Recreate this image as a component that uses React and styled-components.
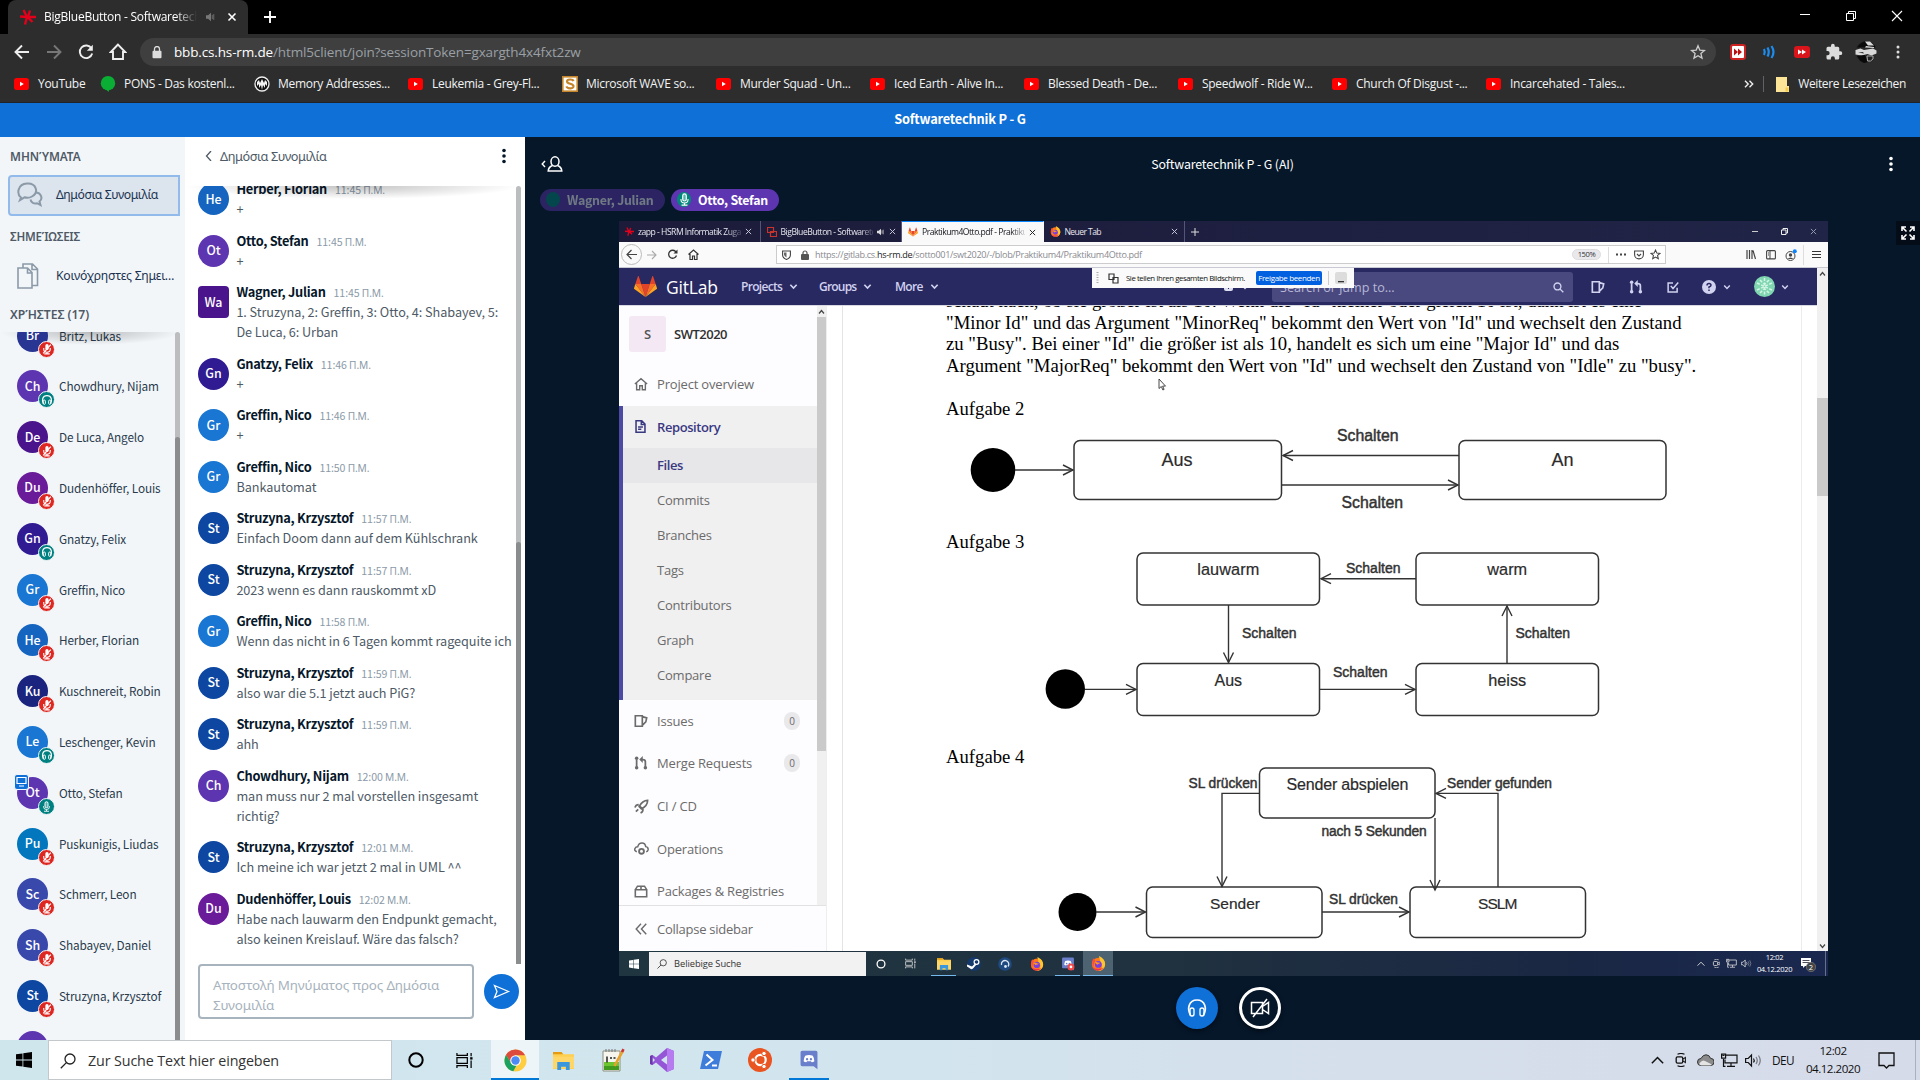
import React from 'react';
import styled, { createGlobalStyle, css } from 'styled-components';

const UI = `"Open Sans", "Noto Sans", sans-serif`;
const SRC = `"Noto Sans CJK JP", "Noto Sans", sans-serif`;
const GREEK = `"Noto Sans", sans-serif`;

const Global = createGlobalStyle`
  *, *::before, *::after { box-sizing: border-box; }
  body { margin: 0; background: #000; font-family: ${UI}; overflow: hidden; }
  svg { display: block; flex-shrink: 0; }
`;

const Desktop = styled.div`
  width: 1920px;
  height: 1080px;
  display: flex;
  flex-direction: column;
  overflow: hidden;
`;

const Txt = styled.span`
  font-family: ${(p) => p.$font || UI};
  font-size: ${(p) => p.$size || 12}px;
  font-weight: ${(p) => p.$weight || 400};
  letter-spacing: ${(p) => p.$ls || 0}px;
  color: ${(p) => p.$color || 'inherit'};
  line-height: ${(p) => p.$lh || 16}px;
  white-space: pre;
`;

const Slot = styled.span`
  width: ${(p) => p.$w}px;
  height: 100%;
  flex: none;
  display: flex;
  align-items: center;
  justify-content: center;
`;

const Spacer = styled.span`
  flex: ${(p) => (p.$w ? 'none' : 1)};
  width: ${(p) => (p.$w ? `${p.$w}px` : 'auto')};
`;

const VLine = styled.span`
  width: 1px;
  flex: none;
  height: ${(p) => p.$h}px;
  background: ${(p) => p.$color};
`;

const Ico = ({ w = 16, h, vb, children, ...rest }) => (
  <svg width={w} height={h || w} viewBox={vb || `0 0 ${w} ${h || w}`} fill="none" {...rest}>
    {children}
  </svg>
);

/* ---------- Browser window ---------- */

const TabStrip = styled.div`
  height: 34px;
  flex: none;
  background: #000;
  display: flex;
  align-items: stretch;
  padding-left: 8px;
`;

const BrowserTab = styled.div`
  width: 240px;
  height: 34px;
  border-radius: 8px 8px 0 0;
  background: #2d2d2d;
  display: flex;
  align-items: center;
  padding-left: 12px;
`;

const TabTitle = styled.div`
  width: 153px;
  margin-left: 8px;
  overflow: hidden;
  display: flex;
  mask-image: linear-gradient(90deg, #000 86%, transparent);
`;

const Toolbar = styled.div`
  height: 35px;
  flex: none;
  background: #2d2d2d;
  display: flex;
  align-items: center;
  padding: 1px 5px 0 6px;
`;

const AddressBar = styled.div`
  width: 1576px;
  height: 28px;
  border-radius: 14px;
  background: #3f3f3f;
  display: flex;
  align-items: center;
  margin-left: 6px;
`;

const Bookmarks = styled.div`
  height: 34px;
  flex: none;
  background: #2d2d2d;
  border-bottom: 1px solid #202225;
  display: flex;
  align-items: center;
  padding: 0 14px 3px 14px;
  color: #f1f3f4;
`;

const Bookmark = styled.div`
  width: ${(p) => p.$w}px;
  flex: none;
  display: flex;
  align-items: center;
  gap: 8px;
`;

const YouTubeIcon = () => (
  <Ico w={16}>
    <rect x="0" y="2" width="15" height="12" rx="2.800" fill="#f00" />
    <path d="M6 5.800v4.400L9.800 8z" fill="#fff" />
  </Ico>
);
const PonsIcon = () => (
  <Ico w={16}>
    <circle cx="8" cy="7.200" r="7.200" fill="#0aae34" />
    <path d="M4 12l5 4-.5-5z" fill="#0aae34" />
  </Ico>
);
const MemoryIcon = () => (
  <Ico w={16}>
    <circle cx="8" cy="8" r="7" fill="#111" stroke="#eee" strokeWidth="1.300" />
    <path d="M3 10V6l2-2 1 3 2-4 2 4 1-3 2 2v4l-2-2v4l-2-3-1 5-1-5-2 3V8z" fill="#f2f2f2" />
  </Ico>
);
const WaveIcon = () => (
  <Ico w={16}>
    <rect x=".8" y=".8" width="14.400" height="14.400" fill="#fff" stroke="#c5862b" strokeWidth="1.600" />
    <path d="M11.500 5.200C10.800 3 5 2.800 5 5.600c0 2.800 6.500 1.600 6.500 4.600 0 3-6.500 2.700-7 .2" stroke="#c5862b" strokeWidth="2.200" />
  </Ico>
);

const BOOKMARKS = [
  ['YouTube', YouTubeIcon, 86],
  ['PONS - Das kostenl...', PonsIcon, 154],
  ['Memory Addresses...', MemoryIcon, 154],
  ['Leukemia - Grey-Fl...', YouTubeIcon, 154],
  ['Microsoft WAVE so...', WaveIcon, 154],
  ['Murder Squad - Un...', YouTubeIcon, 154],
  ['Iced Earth - Alive In...', YouTubeIcon, 154],
  ['Blessed Death - De...', YouTubeIcon, 154],
  ['Speedwolf - Ride W...', YouTubeIcon, 154],
  ['Church Of Disgust -...', YouTubeIcon, 154],
  ['Incarcehated - Tales...', YouTubeIcon, 154],
];

const SpeakerSmall = ({ color = '#777', w = 10 }) => (
  <Ico w={w} vb="0 0 12 12">
    <path d="M0 4h2.500L6 1v10L2.500 8H0z" fill={color} />
    <path d="M7.500 3.500v5M9.300 2.500v7" stroke={color} strokeWidth="1" />
  </Ico>
);

const HsrmStar = ({ w = 16 }) => (
  <Ico w={w} vb="0 0 16 16">
    <path d="M3.500 1l3 6M8 8h8M8 8l2-6.500M7 8L5 15.500M7.500 8l5 5M7 8L0 7.500" stroke="#e2001a" strokeWidth="2.400" />
  </Ico>
);

const Browser = () => (
  <>
    <TabStrip>
      <BrowserTab>
        <HsrmStar />
        <TabTitle><Txt $size={12} $color="#fff" $ls={-0.25}>BigBlueButton - Softwaretechnik</Txt></TabTitle>
        <Slot $w={27}><SpeakerSmall /></Slot>
        <Slot $w={16}><Ico w={10}><path d="M1.500 1.500l7 7M8.500 1.500l-7 7" stroke="#fff" strokeWidth="1.600" /></Ico></Slot>
      </BrowserTab>
      <Slot $w={44}><Ico w={12}><path d="M6 0v12M0 6h12" stroke="#fff" strokeWidth="1.900" /></Ico></Slot>
      <Spacer />
      <Slot $w={46}><Ico w={10}><path d="M0 2.500h10" stroke="#fff" /></Ico></Slot>
      <Slot $w={46}><Ico w={12} h={18}><path d="M1.500 5.500h7v7h-7zM3.500 5.500v-2h7v7h-2" stroke="#fff" /></Ico></Slot>
      <Slot $w={46}><Ico w={12} h={18}><path d="M1 3l10 10M11 3L1 13" stroke="#fff" strokeWidth="1.100" /></Ico></Slot>
    </TabStrip>
    <Toolbar>
      <Slot $w={32}><Ico w={16}><path d="M15 8H2M8 1.500L1.500 8 8 14.500" stroke="#eee" strokeWidth="1.900" /></Ico></Slot>
      <Slot $w={32}><Ico w={16}><path d="M1 8h13M8 1.500L14.500 8 8 14.500" stroke="#777" strokeWidth="1.900" /></Ico></Slot>
      <Slot $w={32}><Ico w={16}><path d="M13.500 4.500A6.300 6.300 0 1 0 14.200 9.500" stroke="#eee" strokeWidth="1.900" /><path d="M14.800.8v6h-6z" fill="#eee" /></Ico></Slot>
      <Slot $w={32}><Ico w={18}><path d="M9 1.500L1.800 9H4v7h10V9h2.200z" stroke="#eee" strokeWidth="1.900" /></Ico></Slot>
      <AddressBar>
        <Slot $w={34}><Ico w={10} h={13}><rect x=".5" y="4.800" width="9" height="7.500" rx="1" fill="#ddd" /><path d="M2.500 5V3a2.500 2.500 0 0 1 5 0v2" stroke="#ddd" strokeWidth="1.300" /></Ico></Slot>
        <Txt $size={13.5} $color="#fff" $ls={-0.15}>bbb.cs.hs-rm.de</Txt>
        <Txt $size={13.5} $color="#9aa0a6" $ls={-0.13}>/html5client/join?sessionToken=gxargth4x4fxt2zw</Txt>
        <Spacer />
        <Slot $w={36}><Ico w={16}><path d="M8 1.800l1.800 4.300 4.600.4-3.500 3 1.100 4.600L8 11.700l-4 2.400L5.100 9.500l-3.500-3 4.600-.4z" stroke="#ccc" strokeWidth="1.300" /></Ico></Slot>
      </AddressBar>
      <Spacer $w={6} />
      <Slot $w={32}><Ico w={16}><rect x="1" y="1" width="14" height="14" rx="2" fill="#fff" stroke="#c22" strokeWidth="2" /><path d="M4 4.500L8 8l-4 3.500zM8 4.500L12 8l-4 3.500z" fill="#b11" /></Ico></Slot>
      <Slot $w={32}><Ico w={16}><path d="M2 5q1.500 3 0 6M5.500 3.500q2.500 4.500 0 9M9.500 2q4 6 0 12" stroke="#1b8df0" strokeWidth="2.200" /></Ico></Slot>
      <Slot $w={32}><Ico w={16}><rect x="0" y="2" width="16" height="12" rx="3" fill="#d9141b" /><path d="M4 5.500L8 8l-4 2.500zM8 5.500L12 8l-4 2.500z" fill="#fff" /></Ico></Slot>
      <Slot $w={32}><Ico w={18} vb="0 0 24 24"><path d="M20.500 11H19V7a2 2 0 0 0-2-2h-4V3.500a2.500 2.500 0 0 0-5 0V5H4a2 2 0 0 0-2 2v3.800h1.500a2.700 2.700 0 0 1 0 5.400H2V20a2 2 0 0 0 2 2h3.800v-1.500a2.700 2.700 0 0 1 5.400 0V22H17a2 2 0 0 0 2-2v-4h1.500a2.500 2.500 0 0 0 0-5z" fill="#ddd" /></Ico></Slot>
      <Slot $w={32}>
        <Ico w={22}>
          <circle cx="11" cy="11" r="11" fill="#2a2a2a" />
          <path d="M2 6.500Q6 0 12 0q6 1 8.500 6z" fill="#0c0c0c" /><path d="M10 .5h5l4 4h-6zM11 5l8 1v1l-9-.5z" fill="#dcdcdc" />
          <path d="M.5 9l5-1.500L9 9l9-1.500 3.500 2v3l-5 2-4-1.500-6 1.500-6-1z" fill="#d8d8d8" /><path d="M3 11.500l5-.5 1 1.500z" fill="#333" />
          <path d="M2 15l8-1 3 7-4 1q-5-2-7-7z" fill="#090909" /><path d="M12 15h6v3l-2.500 2h-3z" stroke="#aaa" fill="#222" />
        </Ico>
      </Slot>
      <Slot $w={32}><Ico w={4} h={14}><circle cx="2" cy="2" r="1.500" fill="#ddd" /><circle cx="2" cy="7" r="1.500" fill="#ddd" /><circle cx="2" cy="12" r="1.500" fill="#ddd" /></Ico></Slot>
    </Toolbar>
    <Bookmarks>
      {BOOKMARKS.map(([label, Icon, w]) => (
        <Bookmark key={label} $w={w}><Icon /><Txt $size={12} $ls={-0.28}>{label}</Txt></Bookmark>
      ))}
      <Spacer />
      <Slot $w={14}><Ico w={10} h={8}><path d="M1 .8L4.200 4 1 7.200M5.500.8L8.700 4 5.500 7.200" stroke="#eee" strokeWidth="1.400" /></Ico></Slot>
      <Spacer $w={7} />
      <VLine $h={16} $color="#5f6368" />
      <Spacer $w={12} />
      <Ico w={13} h={15}><path d="M0 0h11v9h2v6H0z" fill="#fce597" /><path d="M9.500 10.500h3v4h-3z" fill="#f5cc4c" /></Ico>
      <Spacer $w={9} />
      <Txt $size={12} $ls={-0.36}>Weitere Lesezeichen</Txt>
    </Bookmarks>
  </>
);

/* ---------- BigBlueButton ---------- */

const MeetingHeader = styled.div`
  height: 34px;
  flex: none;
  background: #0f70d7;
  display: flex;
  align-items: center;
  justify-content: center;
  padding-bottom: 3px;
`;

const Meeting = styled.div`
  height: 903px;
  flex: none;
  display: flex;
  background: #06172a;
`;

const UserPanel = styled.div`
  width: 185px;
  flex: none;
  background: #f3f6f9;
  display: flex;
  flex-direction: column;
`;

const PanelTitle = styled.div`
  height: ${(p) => p.$h}px;
  padding: ${(p) => p.$pt || 0}px 0 0 10px;
  flex: none;
  display: flex;
  align-items: center;
  color: #4e5a66;
`;

const NavItem = styled.div`
  width: 172px;
  height: 41px;
  margin-left: 8px;
  padding: 0 0 1px 7px;
  flex: none;
  display: flex;
  align-items: center;
  border: 2px solid transparent;
  color: #1c3350;
  ${(p) => p.$active && css`
    background: #dce4ee;
    border-color: #92bbeb;
    border-radius: 4px 0 0 4px;
  `}
`;

const ScrollArea = styled.div`
  flex: ${(p) => (p.$h ? 'none' : 1)};
  height: ${(p) => (p.$h ? `${p.$h}px` : 'auto')};
  min-height: 0;
  overflow: hidden;
  position: relative;
  display: flex;
  padding-right: ${(p) => p.$pr}px;
  &::before {
    content: '';
    position: absolute;
    inset: 0 5px auto 0;
    height: 13px;
    background: radial-gradient(farthest-side at 50% 0, rgba(0,0,0,.24), rgba(0,0,0,0));
  }
`;

const ScrollTrack = styled.div`
  width: 5px;
  flex: none;
  background: #bcbdbf;
  padding-top: ${(p) => p.$top}px;
  display: flex;
  border-radius: 3px;
  &::after {
    content: '';
    flex: 1;
    background: #8b8c8e;
    border-radius: 3px 3px 0 0;
  }
`;

const Users = styled.div`
  flex: 1;
  margin-top: -21.800px;
  padding-left: 17px;
`;

const UserRow = styled.div`
  height: 50.800px;
  display: flex;
  align-items: center;
  gap: 11px;
  color: #2a3b4d;
`;

const Avatar = styled.div`
  position: relative;
  width: 31px;
  height: 32px;
  flex: none;
  border-radius: ${(p) => (p.$square ? '4px' : '50%')};
  background: ${(p) => p.$bg};
  color: #fff;
  display: flex;
  align-items: center;
  justify-content: center;
  padding-bottom: 1px;
`;

const StatusBadge = styled.span`
  position: absolute;
  left: 21px;
  top: 21px;
  width: 17px;
  height: 17px;
  border-radius: 50%;
  border: 1px solid #f3f6f9;
  background: ${(p) => p.$bg};
  display: flex;
  align-items: center;
  justify-content: center;
`;

const PresenterBadge = styled.span`
  position: absolute;
  left: -3px;
  top: -3px;
  width: 15px;
  height: 16px;
  border-radius: 3px;
  border: 1px solid #f3f6f9;
  background: #0f70d7;
  display: flex;
  align-items: center;
  justify-content: center;
`;

const MicMuted = () => (
  <Ico w={12} vb="0 0 22 22"><rect x="8" y="2" width="6" height="11" rx="3" fill="#fff" /><path d="M5 9v2a6 6 0 0 0 12 0V9M11 17v3M6 20h10" stroke="#fff" strokeWidth="2" /><path d="M4 19L18 3" stroke="#fff" strokeWidth="2.200" /></Ico>
);
const MicOn = ({ w = 11 }) => (
  <Ico w={w} vb="0 0 22 22"><rect x="8" y="1.500" width="6" height="12" rx="3" stroke="#fff" strokeWidth="2" fill="rgba(255,255,255,.35)" /><path d="M5 10v1a6 6 0 0 0 12 0v-1M11 17v3M6 20.500h10" stroke="#fff" strokeWidth="1.800" /></Ico>
);
const Phones = ({ w = 12, sw = 2.2 }) => (
  <Ico w={w} vb="0 0 22 22"><path d="M4.500 18C1 12 2.500 3 11 3s10 9 6.500 15" stroke="#fff" strokeWidth={sw} /><rect x="4" y="11" width="4" height="8" rx="2" stroke="#fff" strokeWidth={sw * 0.8} /><rect x="14" y="11" width="4" height="8" rx="2" stroke="#fff" strokeWidth={sw * 0.8} /></Ico>
);

const C = {
  Br: '#283593', Ch: '#5e35b1', De: '#4a148c', Du: '#6a1b9a', Gn: '#311b92', Gr: '#1976d2', He: '#1565c0',
  Ku: '#1a237e', Le: '#1976d2', Ot: '#5e35b1', Pu: '#0277bd', Sc: '#3949ab', Sh: '#3949ab', St: '#0d47a1', Wa: '#4a148c', Ur: '#5e35b1',
};

const USERS = [
  ['Britz, Lukas', 'muted'], ['Chowdhury, Nijam', 'listen'], ['De Luca, Angelo', 'muted'], ['Dudenhöffer, Louis', 'muted'],
  ['Gnatzy, Felix', 'listen'], ['Greffin, Nico', 'muted'], ['Herber, Florian', 'muted'], ['Kuschnereit, Robin', 'muted'],
  ['Leschenger, Kevin', 'listen'], ['Otto, Stefan', 'talk'], ['Puskunigis, Liudas', 'muted'], ['Schmerr, Leon', 'muted'],
  ['Shabayev, Daniel', 'muted'], ['Struzyna, Krzysztof', 'muted'],
];

const Person = ({ name, state }) => (
  <UserRow>
    <Avatar $bg={C[name.slice(0, 2)]}>
      <Txt $font={SRC} $size={12.4} $weight={500}>{name.slice(0, 2)}</Txt>
      <StatusBadge $bg={state === 'muted' ? '#df2721' : '#008081'}>
        {state === 'muted' ? <MicMuted /> : state === 'talk' ? <MicOn /> : <Phones />}
      </StatusBadge>
      {state === 'talk' && (
        <PresenterBadge><Ico w={11}><path d="M1 1.500h9v6H1zM3 10h5" stroke="#fff" strokeWidth="1.200" /></Ico></PresenterBadge>
      )}
    </Avatar>
    <Txt $font={SRC} $size={11.8} $ls={-0.13}>{name}</Txt>
  </UserRow>
);

const ChatPanel = styled.div`
  width: 340px;
  flex: none;
  background: #fff;
  display: flex;
  flex-direction: column;
`;

const ChatHeader = styled.div`
  height: 49px;
  flex: none;
  display: flex;
  align-items: center;
  padding: 0 19px 12px 19px;
  color: #4e5a66;
`;

const Messages = styled.div`
  flex: 1;
  padding-left: 13px;
  margin-top: -3px;
  min-width: 0;
`;

const Message = styled.div`
  display: flex;
  gap: 7.400px;
  padding-bottom: 11.500px;
  height: ${(p) => (p.$two ? 71.5 : 51.5)}px;
`;

const MessageBody = styled.div`
  display: flex;
  flex-direction: column;
  margin-top: -4px;
`;

const MessageHead = styled.div`
  display: flex;
  align-items: baseline;
  height: 20px;
  white-space: pre;
`;

const MESSAGES = [
  ['Herber, Florian', '11:45', 'Π.Μ.', '+'],
  ['Otto, Stefan', '11:45', 'Π.Μ.', '+'],
  ['Wagner, Julian', '11:45', 'Π.Μ.', '1. Struzyna, 2: Greffin, 3: Otto, 4: Shabayev, 5:\nDe Luca, 6: Urban'],
  ['Gnatzy, Felix', '11:46', 'Π.Μ.', '+'],
  ['Greffin, Nico', '11:46', 'Π.Μ.', '+'],
  ['Greffin, Nico', '11:50', 'Π.Μ.', 'Bankautomat'],
  ['Struzyna, Krzysztof', '11:57', 'Π.Μ.', 'Einfach Doom dann auf dem Kühlschrank'],
  ['Struzyna, Krzysztof', '11:57', 'Π.Μ.', '2023 wenn es dann rauskommt xD'],
  ['Greffin, Nico', '11:58', 'Π.Μ.', 'Wenn das nicht in 6 Tagen kommt ragequite ich'],
  ['Struzyna, Krzysztof', '11:59', 'Π.Μ.', 'also war die 5.1 jetzt auch PiG?'],
  ['Struzyna, Krzysztof', '11:59', 'Π.Μ.', 'ahh'],
  ['Chowdhury, Nijam', '12:00', 'Μ.Μ.', 'man muss nur 2 mal vorstellen insgesamt\nrichtig?'],
  ['Struzyna, Krzysztof', '12:01', 'Μ.Μ.', 'Ich meine ich war jetzt 2 mal in UML ^^'],
  ['Dudenhöffer, Louis', '12:02', 'Μ.Μ.', 'Habe nach lauwarm den Endpunkt gemacht,\nalso keinen Kreislauf. Wäre das falsch?'],
];

const Composer = styled.div`
  display: flex;
  align-items: center;
  padding-left: 13px;
  gap: 10px;
  height: 55px;
`;

const MessageInput = styled.div`
  width: 276px;
  height: 55px;
  border: 2px solid #a7b3bd;
  border-radius: 4px;
  padding: 9px 0 0 13px;
  overflow: hidden;
  display: flex;
  align-items: flex-start;
`;

const RoundButton = styled.div`
  width: ${(p) => p.$d}px;
  height: ${(p) => p.$d}px;
  flex: none;
  border-radius: 50%;
  background: ${(p) => (p.$ghost ? '#06172a' : '#0f70d7')};
  border: ${(p) => (p.$ghost ? '3px solid #fff' : 'none')};
  box-shadow: ${(p) => (p.$flat ? 'none' : '0 2px 4px rgba(0,0,0,.5)')};
  display: flex;
  align-items: center;
  justify-content: center;
`;

const Dots = ({ color }) => (
  <Ico w={4} h={16}><circle cx="2" cy="2.500" r="1.800" fill={color} /><circle cx="2" cy="8" r="1.800" fill={color} /><circle cx="2" cy="13.500" r="1.800" fill={color} /></Ico>
);

const Stage = styled.div`
  flex: 1;
  display: flex;
  flex-direction: column;
  position: relative;
`;

const StageBar = styled.div`
  height: 52px;
  flex: none;
  display: flex;
  align-items: center;
  padding: 2px 27px 0 16px;
  color: #fff;
`;

const Talkers = styled.div`
  display: flex;
  gap: 6px;
  height: 22px;
  padding-left: 15px;
  flex: none;
`;

const Talker = styled.div`
  width: ${(p) => p.$w}px;
  height: 22px;
  border-radius: 11px;
  background: #5e35b1;
  opacity: ${(p) => (p.$idle ? 0.42 : 1)};
  display: flex;
  align-items: center;
  padding: 0 0 1px 6px;
  gap: 7px;
  color: #fff;
`;

const TalkerDot = styled.span`
  width: 14px;
  height: 15px;
  border-radius: 50%;
  background: #00897b;
  display: flex;
  align-items: center;
  justify-content: center;
`;

const FullscreenButton = styled.div`
  position: absolute;
  right: 0;
  top: 84px;
  width: 24px;
  height: 24px;
  background: #030c17;
  display: flex;
  align-items: center;
  justify-content: center;
`;

const Actions = styled.div`
  display: flex;
  gap: 21px;
  justify-content: center;
  padding: 11px 0 0 11px;
`;

/* ---------- Shared screen ---------- */

const Shared = styled.div`
  width: 1209px;
  height: 755px;
  margin: 10px 0 0 94px;
  flex: none;
  background: #fff;
  display: flex;
  flex-direction: column;
  position: relative;
  overflow: hidden;
`;

const FxTabs = styled.div`
  height: 21px;
  flex: none;
  background: linear-gradient(90deg, #1c1b3a, #202446);
  display: flex;
  align-items: center;
`;

const FxTab = styled.div`
  width: ${(p) => p.$w || 141.5}px;
  height: 21px;
  flex: none;
  display: flex;
  align-items: center;
  padding-left: 6px;
  gap: 4px;
  background: ${(p) => (p.$active ? '#f9f9fa' : 'transparent')};
  color: ${(p) => (p.$active ? '#15141a' : '#e6e6ee')};
  border-top: ${(p) => (p.$active ? '1px solid #0a84ff' : 'none')};
  border-right: 1px solid ${(p) => (p.$active ? 'transparent' : '#55557a')};
`;

const FxTitle = styled.div`
  width: ${(p) => p.$w}px;
  flex: none;
  overflow: hidden;
  display: flex;
  mask-image: linear-gradient(90deg, #000 86%, rgba(0,0,0,.2));
`;

const FxNav = styled.div`
  height: 26px;
  flex: none;
  background: #fafafb;
  border-bottom: 1px solid #c9c9d4;
  display: flex;
  align-items: center;
  padding-left: 2px;
`;

const FxUrl = styled.div`
  width: 890px;
  height: 19px;
  background: #fff;
  border: 1px solid #ccc;
  display: flex;
  align-items: center;
`;

const BackCircle = styled.div`
  width: 21px;
  height: 21px;
  border-radius: 50%;
  border: 1px solid #bbb;
  display: flex;
  align-items: center;
  justify-content: center;
`;

const ZoomPill = styled.div`
  width: 29px;
  height: 11px;
  border-radius: 6px;
  background: #e9e9ed;
  border: 1px solid #ddd;
  display: flex;
  align-items: center;
  justify-content: center;
`;

const Page = styled.div`
  height: 683px;
  flex: none;
  display: flex;
`;

const PageMain = styled.div`
  width: 1198px;
  display: flex;
  flex-direction: column;
`;

const GitNav = styled.div`
  height: 37px;
  flex: none;
  background: #292961;
  display: flex;
  align-items: center;
  padding-left: 15px;
  color: #d1d1f0;
`;

const GitMenu = styled.div`
  width: ${(p) => p.$w}px;
  display: flex;
  align-items: center;
  gap: 7px;
`;

const GitSearch = styled.div`
  width: 301px;
  height: 30px;
  border-radius: 3px;
  background: #494980;
  display: flex;
  align-items: center;
  padding: 2px 9px 0 8px;
`;

const PageBody = styled.div`
  flex: 1;
  min-height: 0;
  display: flex;
  border-top: 1px solid #d8d8e2;
`;

const SideWrap = styled.div`
  width: 208px;
  flex: none;
  display: flex;
  flex-direction: column;
  border-right: 1px solid #eee;
  background: #fdfcfe;
`;

const SideTop = styled.div`
  height: 600px;
  flex: none;
  display: flex;
  border-bottom: 1px solid #e2e2e2;
`;

const SideList = styled.div`
  width: 198px;
  height: 599px;
  overflow: hidden;
`;

const SideScroll = styled.div`
  width: ${(p) => p.$w}px;
  background: #f0f0f0;
  display: flex;
  flex-direction: column;
  align-items: center;
`;

const Thumb = styled.div`
  width: 100%;
  height: ${(p) => p.$h}px;
  background: #cacaca;
`;

const ScrollGap = styled.span`
  flex: none;
  height: 119px;
`;

const SideItem = styled.div`
  height: ${(p) => p.$h || 42.6}px;
  display: flex;
  align-items: center;
  padding-left: 15px;
  padding-right: 17px;
  background: ${(p) => (p.$selected ? '#e7e6e9' : 'transparent')};
  color: ${(p) => (p.$accent ? '#393982' : '#6b6b6b')};
`;

const SideIcon = styled.span`
  width: 23px;
  display: flex;
`;

const RepoGroup = styled.div`
  border-left: 4px solid #4b4ba3;
  background: #f1f0f1;
  height: 294px;
  & > ${SideItem} { padding-left: 34px; }
  & > ${SideItem}:first-child { padding-left: 11px; }
`;

const ProjectHead = styled.div`
  height: 57px;
  display: flex;
  align-items: center;
  padding: 0 0 1px 10px;
  gap: 8px;
  color: #303030;
`;

const ProjectAvatar = styled.div`
  width: 37px;
  height: 36px;
  border-radius: 3px;
  background: #f4e8f5;
  display: flex;
  align-items: center;
  justify-content: center;
  color: #555;
`;

const Count = styled.span`
  width: 16px;
  height: 18px;
  border-radius: 9px;
  background: #e9e8ea;
  display: flex;
  align-items: center;
  justify-content: center;
`;

const Doc = styled.div`
  width: 960px;
  margin-left: 15px;
  border-left: 1px solid #e4e4e4;
  border-right: 1px solid #ececec;
  overflow: hidden;
  padding-left: 103px;
  display: flex;
  flex-direction: column;
  font-family: "Liberation Serif", serif;
  color: #000;
`;

const Para = styled.p`
  margin: -16px 0 0;
  font-size: 18.720px;
  line-height: 21.500px;
  height: 86px;
  flex: none;
  white-space: pre;
`;

const Heading = styled.p`
  margin: ${(p) => p.$mt || 0}px 0 0;
  font-size: 18.720px;
  line-height: 21px;
  height: 21px;
  flex: none;
  white-space: pre;
`;

const Diagram = styled.svg`
  width: 750px;
  height: ${(p) => p.$h}px;
  font-family: "Liberation Sans", Arial, sans-serif;
`;

const State = ({ x, y, w, h, label, size, base, tl, cx }) => (
  <g>
    <rect x={x} y={y} width={w} height={h} rx="6" fill="#fff" stroke="#333" strokeWidth="1.500" />
    <text x={cx || x + w / 2} y={base} fontSize={size} textAnchor="middle" textLength={tl} fill="#2b2b2b" stroke="#2b2b2b" strokeWidth=".2">{label}</text>
  </g>
);

const HEADS = { r: 'M-10-5L0 0L-10 5', l: 'M10-5L0 0L10 5', d: 'M-5-10L0 0L5-10', u: 'M-5 10L0 0L5 10' };

const Edge = ({ d, tip, dir }) => (
  <g stroke="#333" strokeWidth="1.400" fill="none">
    <path d={d} />
    <path d={HEADS[dir]} transform={`translate(${tip[0]} ${tip[1]})`} />
  </g>
);

const EdgeLabel = ({ x, y, w, size, children }) => (
  <text x={x} y={y} fontSize={size} textLength={w} fill="#333" stroke="#333" strokeWidth=".45">{children}</text>
);

const ShareBar = styled.div`
  position: absolute;
  left: 473px;
  top: 47px;
  width: 262px;
  height: 20px;
  background: #fafafa;
  display: flex;
  align-items: center;
  color: #111;
`;

const StopShare = styled.div`
  width: 66px;
  height: 14px;
  border-radius: 2px;
  background: #0060df;
  color: #fff;
  display: flex;
  align-items: center;
  justify-content: center;
`;

const MinBox = styled.div`
  width: 12px;
  height: 12px;
  border-radius: 2px;
  background: #dcdcdc;
  display: flex;
  align-items: flex-end;
  justify-content: center;
`;

const Cursor = styled.div`
  position: absolute;
  left: 539px;
  top: 157px;
`;

const InnerTaskbar = styled.div`
  height: 25px;
  flex: none;
  background: linear-gradient(90deg, #1f3540, #20313f 45%, #1a2744 80%, #1a2850);
  display: flex;
  align-items: center;
  color: #fff;
`;

const InnerSearch = styled.div`
  width: 217px;
  height: 24px;
  background: #f2f2f2;
  display: flex;
  align-items: center;
  padding-left: 8px;
  gap: 7px;
  color: #333;
`;

const TaskSlot = styled.span`
  width: ${(p) => p.$w}px;
  height: 100%;
  flex: none;
  display: flex;
  align-items: center;
  justify-content: center;
  border-bottom: ${(p) => (p.$open ? `${p.$line || 2}px solid ${p.$line ? '#76b9ed' : '#0078d7'}` : 'none')};
  padding-top: ${(p) => (p.$open ? p.$line || 2 : 0)}px;
  background: ${(p) => p.$bg || 'transparent'};
`;

const Clock = styled.div`
  width: ${(p) => p.$w}px;
  flex: none;
  display: flex;
  flex-direction: column;
  align-items: center;
`;

const Chev = ({ w = 9, color = '#d1d1f0' }) => (
  <Ico w={w} vb="0 0 10 10"><path d="M1.500 3L5 6.800 8.500 3" stroke={color} strokeWidth="1.800" /></Ico>
);
const Cross = ({ color = '#c8c8d8', w = 7 }) => (
  <Ico w={w} vb="0 0 8 8"><path d="M1 1l6 6M7 1L1 7" stroke={color} strokeWidth="1.100" /></Ico>
);
const Tanuki = ({ w }) => (
  <Ico w={w} vb="0 0 24 22">
    <path d="M12 22L7.600 8.500h8.800z" fill="#e24329" /><path d="M12 22L7.600 8.500H1.400zM12 22l4.400-13.500h6.200z" fill="#fc6d26" />
    <path d="M1.400 8.500L0 12.700c-.1.400 0 .8.300 1L12 22zM22.600 8.500l1.400 4.200c.1.400 0 .8-.3 1L12 22z" fill="#fca326" />
    <path d="M1.400 8.500h6.200L4.900.4c-.1-.4-.7-.4-.8 0zM22.600 8.500h-6.200L19.100.4c.1-.4.7-.4.8 0z" fill="#e24329" />
  </Ico>
);
const Firefox = ({ w }) => (
  <Ico w={w} vb="0 0 16 16">
    <circle cx="8" cy="8.800" r="7" fill="#ff7a1a" /><path d="M8.500 0c4 2 7 5 6.500 9.500-.6 4-4 6.500-7.500 6.300C13 14 13 8 9.500 6 10 3.500 8.500 2 8.500 0z" fill="#ffc52e" />
    <path d="M1.200 6.500C1.500 4 2.500 3 3 2.500c.2 1 .8 1.500 1.500 2L2 13z" fill="#ff4f3a" />
    <circle cx="7.800" cy="9" r="3.600" fill="#7b3fe0" /><path d="M4 7c2-1.500 4 .5 6 .3-1 1.500-2.500 1-3.500 2z" fill="#ff9a1f" /><path d="M1.500 11.500c2 5 9 5.500 12 .5-2 2-9 3-12-.5z" fill="#f5304f" />
  </Ico>
);
const Search = ({ w = 12, color = '#222', sw = 1.2 }) => (
  <Ico w={w} vb="0 0 16 16"><circle cx="10" cy="6" r="5" stroke={color} strokeWidth={sw} /><path d="M6.400 9.600L.8 15.200" stroke={color} strokeWidth={sw} /></Ico>
);
const MagnifyRight = ({ w = 11 }) => (
  <Ico w={w} vb="0 0 16 16"><circle cx="6.500" cy="6.500" r="5" stroke="#d1d1f0" strokeWidth="2" /><path d="M10 10l5 5" stroke="#d1d1f0" strokeWidth="2" /></Ico>
);
const WinLogo = ({ w, color }) => (
  <Ico w={w} vb="0 0 16 16"><path d="M0 2.300l6.500-.9v6.100H0zM7.300 1.300L16 0v7.500H7.300zM0 8.400h6.500v6.200L0 13.700zM7.300 8.400H16V16l-8.700-1.200z" fill={color} /></Ico>
);
const TaskView = ({ w, color }) => (
  <Ico w={w} vb="0 0 18 16"><path d="M1 0v2.500h11V0M1 5h11v6H1zM1 16v-2.500h11V16M16 0v3.500M16 8v8" stroke={color} strokeWidth="1.300" /><rect x="15" y="4.500" width="2.500" height="2.500" fill={color} /></Ico>
);
const Explorer = ({ w }) => (
  <Ico w={w} vb="0 0 22 20"><path d="M0 1h9l2 2.500h11V19H0z" fill="#ffcf4f" /><path d="M0 1h9l1.500 2.500H0z" fill="#e39c12" /><path d="M0 6h22v12H0z" fill="#ffd768" /><path d="M4.500 20v-8.500h13V20h-4v-3.500h-5V20z" fill="#3a96dd" /></Ico>
);
const Discord = ({ w, busy }) => (
  <Ico w={w} vb="0 0 22 26">
    <path d="M2 1h18a2 2 0 0 1 2 2v22l-5-4H2a2 2 0 0 1-2-2V3a2 2 0 0 1 2-2z" fill="#6a7fcb" />
    <path d="M6 7.500q5-2 10 0 2 3.500 2 7-1.500 1.500-3.500 1.500l-1-1.500h-5l-1 1.500q-2 0-3.500-1.500 0-3.500 2-7z" fill="#fff" /><circle cx="8.500" cy="12" r="1.500" fill="#6a7fcb" /><circle cx="13.500" cy="12" r="1.500" fill="#6a7fcb" />
    {busy && <><circle cx="16.500" cy="18.500" r="6.500" fill="#f04747" /><circle cx="16.500" cy="18.500" r="2.500" fill="#fff" /></>}
  </Ico>
);
const CaretUp = ({ w, color }) => <Ico w={w} vb="0 0 12 12"><path d="M.8 8.500L6 3.300l5.200 5.200" stroke={color} strokeWidth="1.400" /></Ico>;
const MeetNow = ({ w, color }) => (
  <Ico w={w} vb="0 0 14 16"><path d="M3 1.500q4-2 8 0M3 14.500q4 2 8 0" stroke={color} strokeWidth="1.200" /><rect x="1.500" y="4.500" width="7.500" height="7" rx="1.500" stroke={color} strokeWidth="1.500" /><path d="M9 7l3-1.800v5.600L9 9" stroke={color} strokeWidth="1.200" /></Ico>
);
const Network = ({ w, color }) => (
  <Ico w={w} vb="0 0 17 14"><path d="M5 1.600h11v7.800H4V6M10 9.500v3M6 12.800h8M2.500 5.500v7.300h2M.6.600h4v4h-4zM1.500 2h2" stroke={color} strokeWidth="1.200" /></Ico>
);
const Volume = ({ w, color }) => (
  <Ico w={w} vb="0 0 17 14"><path d="M.6 5h2.600L6.500 1.500v11L3.200 9H.600z" stroke={color} strokeWidth="1.200" /><path d="M8.500 5q1.500 2 0 4" stroke={color} strokeWidth="1.200" /><path d="M11 3.500q2.500 3.500 0 7M13.500 2q3.500 5 0 10" stroke={color} strokeOpacity=".5" strokeWidth="1.200" /></Ico>
);

const gi = { stroke: 'currentColor', strokeWidth: 1.6 };
const icons = {
  home: <Ico w={14} vb="0 0 16 16"><path d="M1 8l7-6 7 6M3 7v7.500h3.500V10h3v4.500H13V7" {...gi} /></Ico>,
  doc: <Ico w={13} vb="0 0 16 16"><path d="M2.500 1h7l4 4v10h-11zM9 1v4.500h4.500M5 8.500h6M5 11.500h4" {...gi} strokeWidth="1.900" /></Ico>,
  issues: <Ico w={14} vb="0 0 16 16"><path d="M1.500 2h8v12h-8zM9.500 3l5 1.500-1 4.500-4 4" {...gi} strokeWidth="1.900" /></Ico>,
  merge: <Ico w={14} vb="0 0 16 16"><path d="M3 4v10M13 14V6.500Q13 4 10 4H8" {...gi} strokeWidth="2" /><path d="M10 0v8L6 4z" fill="currentColor" /><circle cx="3" cy="2.500" r="2" fill="currentColor" /><circle cx="3" cy="13.500" r="2" fill="currentColor" /><circle cx="13" cy="13.500" r="2" fill="currentColor" /></Ico>,
  rocket: <Ico w={15} vb="0 0 16 16"><path d="M14.500 1.500Q9 1.500 5.500 8l2.500 2.500q6.500-3.500 6.500-9zM6 7.500L8.500 10M1 9q1-3 4-3M7 15q3-1.500 2.500-4.500M2 13.500l2.500-2.500" {...gi} strokeWidth="1.800" /></Ico>,
  cloud: <Ico w={15} vb="0 0 16 16"><path d="M3 11.500Q0 10.500 1 8q.8-2 3-2 1-4 4.500-4T12.500 6q3 .5 2.500 3.500-.5 1.500-2 2" {...gi} /><circle cx="8" cy="11" r="2.600" {...gi} strokeWidth="2" /></Ico>,
  pkg: <Ico w={14} vb="0 0 16 16"><path d="M1.500 6.500h13v8h-13zM1.500 6.500L4 2.500h8l2.500 4M8 2.500v4" {...gi} strokeWidth="1.800" /></Ico>,
  todo: <Ico w={12} vb="0 0 16 16"><path d="M13.500 9v5.500h-12v-12H8M5 6.500l3 3.500 7-8" {...gi} strokeWidth="2" /></Ico>,
};

const Side = ({ icon, children, count }) => (
  <SideItem>
    <SideIcon>{icons[icon]}</SideIcon>
    <Txt $size={13} $ls={-0.18}>{children}</Txt>
    <Spacer />
    {count && <Count><Txt $size={10}>{count}</Txt></Count>}
  </SideItem>
);

const SharedScreen = () => (
  <Shared>
    <FxTabs>
      <FxTab>
        <HsrmStar w={9} /><FxTitle $w={103}><Txt $size={8.6} $ls={-0.5}>zapp - HSRM Informatik Zugang</Txt></FxTitle><Cross />
      </FxTab>
      <FxTab>
        <Ico w={10}><path d="M.5.500h6v5h-6zM3.500 4.500h6v5h-6z" stroke="#c8342c" strokeWidth="1.200" /></Ico>
        <FxTitle $w={92}><Txt $size={8.6} $ls={-0.5}>BigBlueButton - Softwaretechnik</Txt></FxTitle><SpeakerSmall color="#ddd" w={8} /><Cross />
      </FxTab>
      <FxTab $active>
        <Tanuki w={10} /><FxTitle $w={103}><Txt $size={8.6} $ls={-0.5}>Praktikum4Otto.pdf - Praktikum4</Txt></FxTitle><Cross color="#222" />
      </FxTab>
      <FxTab>
        <Firefox w={11} /><Txt $size={8.6} $ls={-0.6}>Neuer Tab</Txt><Spacer /><Slot $w={20}><Cross /></Slot>
      </FxTab>
      <Slot $w={20}><Ico w={8}><path d="M4 0v8M0 4h8" stroke="#ddd" /></Ico></Slot>
      <Spacer />
      <Slot $w={30}><Ico w={6}><path d="M0 2.500h6" stroke="#ccc" /></Ico></Slot>
      <Slot $w={29}><Ico w={7}><path d="M.5 2h4.500v4.500H.5zM2 2V.5h4.500V5H5" stroke="#eee" /></Ico></Slot>
      <Slot $w={29}><Cross color="#999ab0" /></Slot>
    </FxTabs>
    <FxNav>
      <BackCircle><Ico w={11}><path d="M11 5.500H1M5.500 1L1 5.500 5.500 10" stroke="#444" strokeWidth="1.200" /></Ico></BackCircle>
      <Slot $w={20}><Ico w={10}><path d="M0 5h9M5 1l4 4-4 4" stroke="#aaa" strokeWidth="1.100" /></Ico></Slot>
      <Slot $w={21}><Ico w={11}><path d="M9 3A4 4 0 1 0 9.500 6.500" stroke="#333" strokeWidth="1.300" /><path d="M10.500.5V4.500h-4z" fill="#333" /></Ico></Slot>
      <Slot $w={20}><Ico w={11}><path d="M.5 5.500l5-4.500 5 4.500M2 5v5.500h2.500V7h2v3.500H9V5" stroke="#333" strokeWidth="1.200" /></Ico></Slot>
      <Spacer $w={73} />
      <FxUrl>
        <Slot $w={18}><Ico w={9} h={10}><path d="M.6 1h7.800v4Q8.400 8 4.500 9.500.6 8 .6 5z" stroke="#444" strokeWidth="1.100" /><path d="M4.500 2.500v5Q2 6 2 4.500v-2z" fill="#666" /></Ico></Slot>
        <Slot $w={19}><Ico w={8} h={10}><rect y="4" width="8" height="6" rx="1" fill="#555" /><path d="M2 4.500V3a2 2 0 0 1 4 0v1.500" stroke="#555" strokeWidth="1.200" /></Ico></Slot>
        <Spacer $w={1} />
        <Txt $size={9.1} $ls={-0.33} $color="#8a8a90">https://gitlab.cs.</Txt><Txt $size={9.1} $ls={-0.33} $color="#222">hs-rm.de</Txt><Txt $size={9.1} $ls={-0.33} $color="#8a8a90">/sotto001/swt2020/-/blob/Praktikum4/Praktikum4Otto.pdf</Txt>
        <Spacer />
        <ZoomPill><Txt $size={7.6} $ls={-0.4} $color="#333" $lh={9}>150%</Txt></ZoomPill>
        <Spacer $w={7} /><VLine $h={16} $color="#ddd" />
        <Slot $w={23}><Ico w={10} h={3}><path d="M0 .5h2v2H0zM4 .5h2v2H4zM8 .5h2v2H8z" fill="#444" /></Ico></Slot>
        <Slot $w={14}><Ico w={10}><path d="M.6 1h8.800v3.500A4.400 4.400 0 0 1 .6 4.500zM3 4l2 2 2-2" stroke="#444" strokeWidth="1.100" /></Ico></Slot>
        <Slot $w={19}><Ico w={11} vb="0 0 16 16"><path d="M8 1.500l2 4.500 4.500.4-3.500 3 1.100 4.800L8 11.700l-4.100 2.500L5 9.400l-3.500-3L6 6z" stroke="#444" strokeWidth="1.500" /></Ico></Slot>
      </FxUrl>
      <Spacer />
      <Slot $w={20}><Ico w={10}><path d="M1 0v9M3.500 0v9M6 0v9M7 .5L9.500 9" stroke="#444" strokeWidth="1.200" /></Ico></Slot>
      <Slot $w={20}><Ico w={10}><rect x=".6" y=".6" width="8.800" height="8.300" rx="1" stroke="#444" strokeWidth="1.100" /><path d="M4 1v8M2 3h1M2 5h1" stroke="#444" /></Ico></Slot>
      <Slot $w={20}><Ico w={12}><circle cx="5.500" cy="7" r="4.500" stroke="#444" /><circle cx="5.500" cy="6" r="1.700" fill="#444" /><path d="M2.500 10q3-3 6 0z" fill="#444" /><circle cx="9.800" cy="2.200" r="2" fill="#0a84ff" /></Ico></Slot>
      <Spacer $w={2} /><VLine $h={20} $color="#ddd" /><Slot $w={24}><Ico w={9}><path d="M0 1.500h9M0 4.500h9M0 7.500h9" stroke="#333" strokeWidth="1.200" /></Ico></Slot>
    </FxNav>
    <Page>
      <PageMain>
        <GitNav>
          <Tanuki w={23} />
          <Spacer $w={9} />
          <GitMenu $w={75}><Txt $size={17.5} $ls={-0.2} $color="#fff" $lh={24}>GitLab</Txt></GitMenu>
          <GitMenu $w={78}><Txt $size={12} $weight={600} $ls={-0.7}>Projects</Txt><Chev /></GitMenu>
          <GitMenu $w={76}><Txt $size={12} $weight={600} $ls={-0.8}>Groups</Txt><Chev /></GitMenu>
          <GitMenu $w={60}><Txt $size={12} $weight={600} $ls={-0.7}>More</Txt><Chev /></GitMenu>
          <Spacer />
          <Slot $w={10}><Ico w={9}><rect width="9" height="9" rx="2" fill="#e0e0f4" /><path d="M4.500 2v5M2 4.500h5" stroke="#292961" /></Ico></Slot>
          <Slot $w={24}><Chev w={8} /></Slot><Spacer $w={15} />
          <GitSearch><Txt $size={12.6} $color="#b7b7d6">Search or jump to...</Txt><Spacer /><MagnifyRight /></GitSearch>
          <Slot $w={50}>{icons.issues}</Slot>
          <Slot $w={26}>{icons.merge}</Slot>
          <Slot $w={48}>{icons.todo}</Slot>
          <Slot $w={23}><Ico w={14}><circle cx="7" cy="7" r="7" fill="#d1d1f0" /><path d="M5 5.500q0-2 2-2t2 1.800q0 1.200-2 1.700v1.200M7 9.500V11" stroke="#292961" strokeWidth="1.500" /></Ico></Slot>
          <Slot $w={13}><Chev w={8} /></Slot>
          <Spacer $w={18} />
          <Slot $w={26}><Ico w={21}><circle cx="10.500" cy="10.500" r="10.500" fill="#7fd6b0" /><path d="M10.500 2v17M3 7l15 7M3 14l15-7M6 4l4 4M15 4l-4 4M6 17l4-4M15 17l-4-4" stroke="#d4f5e6" strokeWidth="1.500" strokeDasharray="3 1.500" /></Ico></Slot>
          <Slot $w={16}><Chev w={8} /></Slot>
          <Spacer $w={24} />
        </GitNav>
        <PageBody>
          <SideWrap>
            <SideTop>
              <SideList>
                <ProjectHead>
                  <ProjectAvatar><Txt $size={13} $weight={600}>S</Txt></ProjectAvatar>
                  <Txt $size={13} $weight={600} $ls={-0.5}>SWT2020</Txt>
                </ProjectHead>
                <Side icon="home">Project overview</Side>
                <RepoGroup>
                  <SideItem $accent $h={42}><SideIcon>{icons.doc}</SideIcon><Txt $size={13} $weight={600} $ls={-0.42}>Repository</Txt></SideItem>
                  <SideItem $accent $selected $h={35}><Txt $size={13} $weight={600} $ls={-0.4}>Files</Txt></SideItem>
                  {['Commits', 'Branches', 'Tags', 'Contributors', 'Graph', 'Compare'].map((t) => (
                    <SideItem key={t} $h={35}><Txt $size={13} $ls={-0.22}>{t}</Txt></SideItem>
                  ))}
                </RepoGroup>
                <Side icon="issues" count="0">Issues</Side>
                <Side icon="merge" count="0">Merge Requests</Side>
                <Side icon="rocket">CI / CD</Side>
                <Side icon="cloud">Operations</Side>
                <Side icon="pkg">Packages &amp; Registries</Side>
              </SideList>
              <SideScroll $w={9}>
                <Ico w={7} h={11}><path d="M1 7.500L3.500 4.500 6 7.500" stroke="#444" strokeWidth="1.200" /></Ico>
                <Thumb $h={434} />
              </SideScroll>
            </SideTop>
            <SideItem $h={47}><SideIcon><Ico w={14} vb="0 0 16 16"><path d="M8 2L2.500 8 8 14M14 2L8.500 8 14 14" {...gi} /></Ico></SideIcon><Txt $size={13} $ls={-0.25}>Collapse sidebar</Txt></SideItem>
          </SideWrap>
          <Doc>
            <Para>{'schaut nach, ob sie größer ist als 10. Wenn die "Id" kleiner oder gleich 10 ist, dann ist es eine\n"Minor Id" und das Argument "MinorReq" bekommt den Wert von "Id" und wechselt den Zustand\nzu "Busy". Bei einer "Id" die größer ist als 10, handelt es sich um eine "Major Id" und das\nArgument "MajorReq" bekommt den Wert von "Id" und wechselt den Zustand von "Idle" zu "busy".'}</Para>
            <Heading $mt={22}>Aufgabe 2</Heading>
            <Diagram $h={112} viewBox="946 419 750 112">
              <ellipse cx="993" cy="470" rx="22.300" ry="22" fill="#000" />
              <Edge d="M1015 470H1073" tip={[1073, 470]} dir="r" />
              <State x={1074} y={440.5} w={207.5} h={59} label="Aus" size={18} base={466.3} cx={1177} />
              <State x={1459} y={440.5} w={207} h={59} label="An" size={18} base={466.3} />
              <Edge d="M1459 455.500H1283" tip={[1283, 455.5]} dir="l" />
              <Edge d="M1282 485H1458" tip={[1458, 485]} dir="r" />
              <EdgeLabel x={1337} y={441} w={61.5} size={15.8}>Schalten</EdgeLabel>
              <EdgeLabel x={1341.5} y={507.5} w={61.5} size={15.8}>Schalten</EdgeLabel>
            </Diagram>
            <Heading>Aufgabe 3</Heading>
            <Diagram $h={194} viewBox="946 552 750 194">
              <circle cx="1065.300" cy="689" r="19.700" fill="#000" />
              <Edge d="M1085 689.400H1136" tip={[1136, 689.4]} dir="r" />
              <State x={1137} y={553} w={182.500} h={52} label="lauwarm" size={16.3} base={575.2} tl={62} />
              <State x={1416} y={553} w={182.500} h={52} label="warm" size={16.3} base={575.2} />
              <State x={1137} y={663.5} w={182.500} h={52} label="Aus" size={16} base={686} />
              <State x={1416} y={663.5} w={182.500} h={52} label="heiss" size={16.3} base={686} />
              <Edge d="M1416 578.700H1321" tip={[1321, 578.7]} dir="l" />
              <Edge d="M1228.500 605V662.500" tip={[1228.5, 662.5]} dir="d" />
              <Edge d="M1320 689.400H1415" tip={[1415, 689.4]} dir="r" />
              <Edge d="M1507 663.500V606" tip={[1507, 606]} dir="u" />
              <EdgeLabel x={1346} y={573} w={54.5} size={14}>Schalten</EdgeLabel>
              <EdgeLabel x={1242} y={638.3} w={54.5} size={14}>Schalten</EdgeLabel>
              <EdgeLabel x={1515.5} y={638.3} w={54.5} size={14}>Schalten</EdgeLabel>
              <EdgeLabel x={1333} y={677.3} w={54.5} size={14}>Schalten</EdgeLabel>
            </Diagram>
            <Heading>Aufgabe 4</Heading>
            <Diagram $h={184} viewBox="946 767 750 184">
              <circle cx="1077.500" cy="912" r="19" fill="#000" />
              <Edge d="M1096 912H1145.500" tip={[1145.5, 912]} dir="r" />
              <State x={1259.5} y={768} w={175.500} h={50} label="Sender abspielen" size={16} base={790} tl={122} cx={1347.5} />
              <State x={1146.5} y={887} w={175.500} h={50.5} label="Sender" size={15.5} base={908.5} cx={1235} />
              <State x={1410} y={887} w={175.500} h={50.5} label="SSLM" size={15.5} base={908.5} tl={39.5} />
              <Edge d="M1260 793.400H1222V887" tip={[1222, 886.5]} dir="d" />
              <Edge d="M1435 818V890" tip={[1435, 890]} dir="d" />
              <Edge d="M1498 887V793.400H1436" tip={[1436, 793.4]} dir="l" />
              <Edge d="M1322 912H1409" tip={[1409, 912]} dir="r" />
              <EdgeLabel x={1188.5} y={787.5} w={69} size={13.8}>SL drücken</EdgeLabel>
              <EdgeLabel x={1447} y={787.5} w={105} size={13.8}>Sender gefunden</EdgeLabel>
              <EdgeLabel x={1321.6} y={836.2} w={105} size={13.8}>nach 5 Sekunden</EdgeLabel>
              <EdgeLabel x={1329} y={904} w={69} size={13.8}>SL drücken</EdgeLabel>
            </Diagram>
          </Doc>
        </PageBody>
      </PageMain>
      <SideScroll $w={11}>
        <Ico w={7} h={11}><path d="M1 7.500L3.500 4.500 6 7.500" stroke="#444" strokeWidth="1.200" /></Ico>
        <ScrollGap />
        <Thumb $h={98} />
        <Spacer />
        <Ico w={7} h={11}><path d="M1 4.500L3.500 7.500 6 4.500" stroke="#444" strokeWidth="1.200" /></Ico>
      </SideScroll>
    </Page>
    <InnerTaskbar>
      <Slot $w={30}><WinLogo w={10} color="#fff" /></Slot>
      <InnerSearch><Search w={10} /><Txt $size={9.3} $ls={-0.05}>Beliebige Suche</Txt></InnerSearch>
      <Slot $w={29}><Ico w={10}><circle cx="5" cy="5" r="3.900" stroke="#fff" strokeWidth="1.300" /></Ico></Slot>
      <Slot $w={31}><TaskView w={11} color="#ddd" /></Slot>
      <Spacer $w={5} />
      <TaskSlot $w={25} $open $line={1}><Explorer w={14} /></TaskSlot>
      <Slot $w={36}><Ico w={14}><circle cx="7" cy="7" r="7" fill="#14386b" /><circle cx="9.500" cy="5" r="2.400" stroke="#fff" strokeWidth="1.200" /><path d="M0 7.500l5 2 3-3 1.500 1-3.500 4q-2 1.500-3.500-.5L0 9.500z" fill="#fff" /></Ico></Slot>
      <Slot $w={26}><Ico w={14}><circle cx="7" cy="7" r="6.800" fill="#1f4a80" /><path d="M3.500 8a3.700 3.700 0 1 1 6.500 1.500" stroke="#dfe8f2" strokeWidth="1.300" /><circle cx="7.500" cy="9.500" r="1.400" fill="#dfe8f2" /></Ico></Slot>
      <Slot $w={37}><Firefox w={14} /></Slot>
      <TaskSlot $w={25} $open $line={1}><Discord w={14} busy /></TaskSlot>
      <Spacer $w={3} />
      <TaskSlot $w={30} $open $line={1} $bg="#4d6372"><Firefox w={15} /></TaskSlot>
      <Spacer />
      <Slot $w={15}><CaretUp w={8} color="#ddd" /></Slot>
      <Slot $w={16}><MeetNow w={9} color="#ddd" /></Slot>
      <Slot $w={15}><Network w={11} color="#ddd" /></Slot>
      <Slot $w={15}><Volume w={11} color="#ddd" /></Slot>
      <Clock $w={41}><Txt $size={7.5} $lh={11.5} $ls={-0.3}>12:02</Txt><Txt $size={7.5} $lh={11.5} $ls={-0.3}>04.12.2020</Txt></Clock>
      <Slot $w={26}><Ico w={16}><path d="M1 2h10v8H5l-2 2v-2H1z" fill="#fff" /><path d="M2.500 4.500h7M2.500 6.500h7" stroke="#223" strokeWidth=".8" /><circle cx="11" cy="11" r="4.700" fill="#444" stroke="#888" strokeWidth=".6" /><text x="11" y="13.700" fontSize="7.500" fill="#fff" textAnchor="middle" fontFamily="Open Sans">2</text></Ico></Slot>
      <Spacer $w={4} /><VLine $h={25} $color="#66708a" /><Spacer $w={2} />
    </InnerTaskbar>
    <ShareBar>
      <Slot $w={10}><Ico w={3} h={12}><path d="M1.500 0v12" stroke="#aaa" strokeWidth="2" strokeDasharray="1 1.500" /></Ico></Slot>
      <Slot $w={22}><Ico w={11}><path d="M1 1h5v5.500H1zM5 4.500h5V10H5z" stroke="#333" strokeWidth="1.200" fill="#fafafa" /></Ico></Slot>
      <Slot $w={123}><Txt $size={7.8} $ls={-0.42}>Sie teilen Ihren gesamten Bildschirm.</Txt></Slot>
      <Spacer $w={9} />
      <StopShare><Txt $size={8} $ls={-0.35}>Freigabe beenden</Txt></StopShare>
      <Spacer $w={6} /><VLine $h={14} $color="#ccc" /><Spacer $w={6} />
      <MinBox><Ico w={6} h={3}><path d="M0 .7h6" stroke="#222" strokeWidth="1.200" /></Ico></MinBox>
    </ShareBar>
    <Cursor><Ico w={9} h={13}><path d="M1 1v9.500l2.300-2 1.600 3.500 1.200-.6-1.500-3.300H7.500z" fill="#fff" stroke="#333" strokeWidth=".9" /></Ico></Cursor>
  </Shared>
);

const BBB = () => (
  <>
    <MeetingHeader><Txt $font={SRC} $size={12.8} $ls={-0.2} $weight={700} $color="#fff">Softwaretechnik P - G</Txt></MeetingHeader>
    <Meeting>
      <UserPanel>
        <PanelTitle $h={38}><Txt $font={GREEK} $size={11.8} $weight={600} $ls={-0.08}>ΜΗΝΎΜΑΤΑ</Txt></PanelTitle>
        <NavItem $active>
          <Ico w={26}><path d="M4 15.500C-.5 12 .5 2 10 1.500c9.500-.5 12 9 5 13-2 1.200-5.500 1.500-7.500.8L3 18z" stroke="#8b9aa8" strokeWidth="2" /><path d="M18.500 10.500c6 0 7.500 6.500 4 9l1 3.500-3.500-1.800c-3 .8-6-.7-6.500-3.700" stroke="#8b9aa8" strokeWidth="2" /></Ico>
          <Spacer $w={13} /><Txt $font={GREEK} $size={12.2} $ls={-0.42}>Δημόσια Συνομιλία</Txt>
        </NavItem>
        <PanelTitle $h={40} $pt={2}><Txt $font={GREEK} $size={11.6} $weight={600} $ls={-0.25}>ΣΗΜΕΊΩΣΕΙΣ</Txt></PanelTitle>
        <NavItem>
          <Ico w={26}><path d="M6 4.500V1h9.500l5 5v16.500H15M15 1v5.500h5.500M1 5h9.500l4.500 4.500V25H1zM10.500 5v5H15" stroke="#8b9aa8" strokeWidth="1.600" /></Ico>
          <Spacer $w={13} /><Txt $font={GREEK} $size={12.2} $ls={-0.25}>Κοινόχρηστες Σημει…</Txt>
        </NavItem>
        <PanelTitle $h={35}><Txt $font={GREEK} $size={12.2} $weight={600} $ls={-0.05}>ΧΡΉΣΤΕΣ (17)</Txt></PanelTitle>
        <ScrollArea $pr={5}>
          <Users>
            {USERS.map(([n, s]) => <Person key={n} name={n} state={s} />)}
            <UserRow><Avatar $bg={C.Ur} /></UserRow>
          </Users>
          <ScrollTrack $top={105} />
        </ScrollArea>
      </UserPanel>
      <ChatPanel>
        <ChatHeader>
          <Ico w={8} h={10}><path d="M7 0L2.500 5 7 10" stroke="#4e5a66" strokeWidth="1.300" /></Ico>
          <Spacer $w={8} /><Txt $font={GREEK} $size={12.7} $ls={-0.42}>Δημόσια Συνομιλία</Txt>
          <Spacer /><Dots color="#06172a" />
        </ChatHeader>
        <ScrollArea $pr={4} $h={778}>
          <Messages>
            {MESSAGES.map(([n, t, s, body], i) => (
              <Message key={i} $two={body.includes('\n')}>
                <Avatar $bg={C[n.slice(0, 2)]} $square={n.startsWith('Wa')}><Txt $font={SRC} $size={12.4} $weight={500}>{n.slice(0, 2)}</Txt></Avatar>
                <MessageBody>
                  <MessageHead>
                    <Txt $font={SRC} $size={12.8} $ls={-0.27} $weight={700} $color="#06172a" $lh={20}>{n}</Txt><Spacer $w={8} />
                    <Txt $font={SRC} $size={10.6} $ls={-0.1} $color="#8b9aa8" $lh={20}>{t} </Txt><Txt $font={GREEK} $size={10.2} $ls={-0.1} $color="#8b9aa8" $lh={20}>{s}</Txt>
                  </MessageHead>
                  <Txt $font={SRC} $size={12.7} $ls={-0.06} $color="#4e5a66" $lh={20}>{body}</Txt>
                </MessageBody>
              </Message>
            ))}
          </Messages>
          <ScrollTrack $top={356} />
        </ScrollArea>
        <Composer>
          <MessageInput><Txt $font={GREEK} $size={13.4} $ls={-0.15} $color="#a7b3bd" $lh={20}>{'Αποστολή Μηνύματος προς Δημόσια\nΣυνομιλία'}</Txt></MessageInput>
          <RoundButton $d={35} $flat><Ico w={17} h={15}><path d="M1.500 1.500l14 6-14 6 2.500-6z" stroke="#fff" strokeWidth="1.300" /></Ico></RoundButton>
        </Composer>
      </ChatPanel>
      <Stage>
        <StageBar>
          <Ico w={22} h={16}><path d="M4 5L1.200 8 4 11" stroke="#fff" strokeWidth="1.400" /><ellipse cx="14" cy="5.500" rx="4" ry="4.700" stroke="#fff" strokeWidth="1.500" /><path d="M11.500 9.500Q7.500 11 7.200 15h13.600q-.3-4-4.300-5.500" stroke="#fff" strokeWidth="1.500" /></Ico>
          <Spacer /><Txt $font={SRC} $size={12.4} $ls={-0.13}>Softwaretechnik P - G (AI)</Txt><Spacer /><Spacer $w={7} />
          <Dots color="#fff" />
        </StageBar>
        <Talkers>
          <Talker $w={125} $idle><TalkerDot /><Txt $font={SRC} $size={12.4} $ls={-0.25} $weight={700}>Wagner, Julian</Txt></Talker>
          <Talker $w={108}><TalkerDot><MicOn w={13} /></TalkerDot><Txt $font={SRC} $size={12.4} $ls={-0.25} $weight={700}>Otto, Stefan</Txt></Talker>
        </Talkers>
        <SharedScreen />
        <Actions>
          <RoundButton $d={42}><Phones w={22} sw={1.7} /></RoundButton>
          <RoundButton $d={42} $ghost><Ico w={22} vb="0 0 22 22"><path d="M2.500 5.500h11v11h-11zM13.500 9.500l6-4v11l-6-4M4 20L18 2" stroke="#fff" strokeWidth="1.500" /></Ico></RoundButton>
        </Actions>
        <FullscreenButton><Ico w={14}><path d="M1 5V1h4M9 1h4v4M13 9v4H9M5 13H1V9M1.500 1.500L5.500 5.500M12.500 1.500L8.500 5.500M12.500 12.500L8.500 8.500M1.500 12.500L5.500 8.500" stroke="#fff" strokeWidth="1.600" /></Ico></FullscreenButton>
      </Stage>
    </Meeting>
  </>
);

/* ---------- Windows taskbar ---------- */

const Taskbar = styled.div`
  height: 40px;
  flex: none;
  background: linear-gradient(90deg, #cfe6ed, #d2e5ee 45%, #d5deeb 75%, #d6dbe9);
  display: flex;
  align-items: center;
  color: #111;
`;

const TaskSearch = styled.div`
  width: 344px;
  height: 40px;
  background: #fff;
  border: 1px solid #c4c8ca;
  display: flex;
  align-items: center;
  padding: 1px 0 0 11px;
  gap: 12px;
  color: #333;
`;

const OuterTaskbar = () => (
  <Taskbar>
    <Slot $w={48}><WinLogo w={16} color="#000" /></Slot>
    <TaskSearch><Search w={16} sw={1.3} /><Txt $size={14.3} $ls={-0.12} $lh={20}>Zur Suche Text hier eingeben</Txt></TaskSearch>
    <Slot $w={48}><Ico w={16}><circle cx="8" cy="8" r="6.700" stroke="#000" strokeWidth="2" /></Ico></Slot>
    <Slot $w={48}><TaskView w={17} color="#000" /></Slot>
    <Spacer $w={3} />
    <TaskSlot $w={48} $open $bg="#edf5f9">
      <Ico w={23} vb="0 0 24 24"><circle cx="12" cy="12" r="11.500" fill="#ffcd40" /><path d="M2 6.300A11.500 11.500 0 0 1 22 6.500H12L7 14z" fill="#dd4b3e" /><path d="M2 6.300l6 9 5 2-3.300 6A11.500 11.500 0 0 1 2 6.300z" fill="#1aa260" /><circle cx="12" cy="12" r="5.500" fill="#fff" /><circle cx="12" cy="12" r="4.400" fill="#4c8bf5" /></Ico>
    </TaskSlot>
    <Slot $w={49}><Explorer w={21} /></Slot>
    <Slot $w={49}><Ico w={24}><path d="M2 3h17v20H2z" fill="#f6f6ee" stroke="#8b8f80" /><path d="M3 14h15v8H3z" fill="#6cc630" /><path d="M3 18h15v4H3z" fill="#3f9a1d" /><path d="M5 1v3M8 1v3M11 1v3M14 1v3" stroke="#777" /><path d="M6 8.500v6M9 10h2M12.500 10h2" stroke="#222" strokeWidth="1.500" /><path d="M22 2.500L15 15l-1.500 3" stroke="#e8a32e" strokeWidth="2.600" /><path d="M21 4l1.500-2.800" stroke="#c33" strokeWidth="2.600" /></Ico></Slot>
    <Slot $w={49}><Ico w={24}><path d="M17 0l7 3v18l-7 3L6 14.500 2.500 17 0 16V8l2.500-1L6 9.500zM17 7.500L11 12l6 4.500zM2.500 9.500v5L5 12z" fill="#9455d6" fillRule="evenodd" /><path d="M17 0l7 3v18l-7 3z" fill="#b77bf0" /><path d="M0 8l2.500-1v10L0 16z" fill="#6b37ab" /></Ico></Slot>
    <Slot $w={49}><Ico w={24} h={20}><path d="M5 1h18l-4 18H1z" fill="#3f7ddb" /><path d="M7.500 4.500l6 5.500-7 5.500M13 15.500h5" stroke="#fff" strokeWidth="2" /></Ico></Slot>
    <Slot $w={49}><Ico w={24}><circle cx="12" cy="12" r="12" fill="#e95420" /><circle cx="12.500" cy="12" r="5.200" stroke="#fff" strokeWidth="2.200" /><circle cx="5" cy="12" r="2.200" fill="#fff" stroke="#e95420" /><circle cx="16" cy="5.500" r="2.200" fill="#fff" stroke="#e95420" /><circle cx="16" cy="18.500" r="2.200" fill="#fff" stroke="#e95420" /></Ico></Slot>
    <Spacer $w={5} />
    <TaskSlot $w={40} $open><Discord w={20} /></TaskSlot>
    <Spacer />
    <Slot $w={24}><CaretUp w={13} color="#111" /></Slot>
    <Slot $w={24}><MeetNow w={14} color="#111" /></Slot>
    <Slot $w={24}><Ico w={17} h={12}><path d="M4 11.500a3.500 3.500 0 0 1 0-7Q6 .7 9 .8q3.500 0 4.500 3.500a3.600 3.600 0 0 1 0 7.200z" fill="#8b8b8b" stroke="#333" /><path d="M2 10q3-5 6-3l7 3.500-2 1H4z" fill="#e4e4e4" /></Ico></Slot>
    <Slot $w={24}><Network w={17} color="#111" /></Slot>
    <Slot $w={24}><Volume w={17} color="#111" /></Slot>
    <Slot $w={36}><Txt $size={11.8} $ls={-0.6}>DEU</Txt></Slot>
    <Clock $w={64}><Txt $size={11.6} $ls={-0.5} $lh={18}>12:02</Txt><Txt $size={11.6} $ls={-0.5} $lh={18}>04.12.2020</Txt></Clock>
    <Slot $w={43}><Ico w={17}><path d="M1 1h15v12.500h-5L8.500 16 6 13.500H1z" stroke="#111" strokeWidth="1.300" /></Ico></Slot>
    <Spacer $w={7} /><VLine $h={40} $color="#a9b2bd" /><Spacer $w={4} />
  </Taskbar>
);

export default function App() {
  return (
    <Desktop>
      <Global />
      <Browser />
      <BBB />
      <OuterTaskbar />
    </Desktop>
  );
}
